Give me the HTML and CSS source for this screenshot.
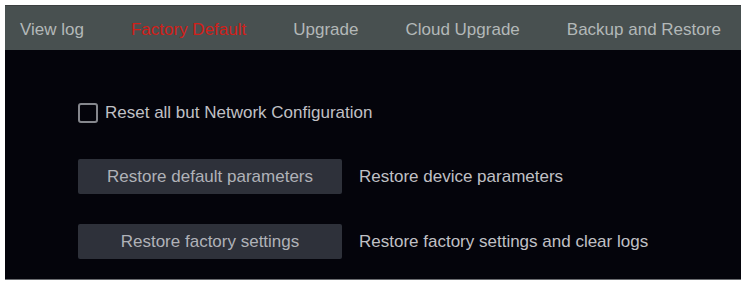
FILE: index.html
```html
<!DOCTYPE html>
<html>
<head>
<meta charset="utf-8">
<link rel="stylesheet" href="styles.css">
</head>
<body>
<div class="frame">
  <nav class="tabs">
    <span class="tab">View log</span>
    <span class="tab active">Factory Default</span>
    <span class="tab">Upgrade</span>
    <span class="tab">Cloud Upgrade</span>
    <span class="tab">Backup and Restore</span>
  </nav>
  <main class="content">
    <label class="check-row">
      <span class="checkbox"></span>
      <span class="check-label">Reset all but Network Configuration</span>
    </label>
    <div class="action-row">
      <button class="btn">Restore default parameters</button>
      <span class="desc">Restore device parameters</span>
    </div>
    <div class="action-row">
      <button class="btn">Restore factory settings</button>
      <span class="desc">Restore factory settings and clear logs</span>
    </div>
  </main>
</div>
</body>
</html>
```
FILE: styles.css
```css
html, body {
  margin: 0;
  padding: 0;
  background: #ffffff;
}
body {
  padding: 5px 4px 0 5px;
  font-family: "Liberation Sans", Arial, sans-serif;
}
.frame {
  width: 736px;
  height: 274px;
  background: #04040b;
  border-bottom: 1px solid #6a6c70;
  display: flex;
  flex-direction: column;
}
.tabs {
  height: 45px;
  background: #485050;
  border-top: 1px solid #3b3f40;
  box-sizing: border-box;
  display: flex;
  align-items: center;
  gap: 47px;
  padding: 4px 0 0 15px;
  font-size: 17px;
  color: #b3b8b8;
}
.tab.active {
  color: #d11f1a;
}
.content {
  display: flex;
  flex-direction: column;
  padding: 52px 0 0 73px;
}
.check-row {
  display: flex;
  align-items: center;
  gap: 7px;
  height: 22px;
  font-size: 17px;
  color: #c0c0c5;
}
.checkbox {
  width: 20px;
  height: 20px;
  border: 2px solid #85878d;
  border-radius: 3px;
  box-sizing: border-box;
}
.action-row {
  display: flex;
  align-items: center;
  gap: 17px;
  margin-top: 35px;
}
.action-row + .action-row {
  margin-top: 30px;
}
.btn {
  width: 264px;
  height: 35px;
  background: #2e313a;
  border: none;
  border-radius: 2px;
  color: #b0b2b8;
  font-family: "Liberation Sans", Arial, sans-serif;
  font-size: 17px;
  padding: 0;
}
.desc {
  font-size: 17px;
  color: #c0c0c5;
}
```
